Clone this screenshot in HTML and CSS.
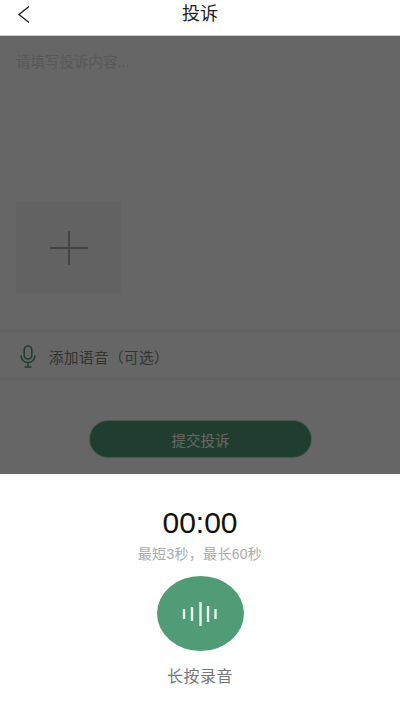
FILE: index.html
```html
<!DOCTYPE html>
<html lang="zh">
<head>
<meta charset="utf-8">
<title>投诉</title>
<link rel="stylesheet" href="styles.css">
</head>
<body>
<div class="page">
  <header class="nav">
    <svg class="back" width="16" height="20" viewBox="0 0 16 20"><path d="M13 1.5 L3 9.5 L13 17.5" fill="none" stroke="#222" stroke-width="1.4"/></svg>
    <h1 class="title">投诉</h1>
  </header>
  <main class="form">
    <p class="placeholder">请填写投诉内容...</p>
    <div class="add-box">
      <svg width="38" height="34" viewBox="0 0 38 34"><path d="M0 17H38M19 0V34" stroke="#a8a8a8" stroke-width="2"/></svg>
    </div>
    <div class="voice-row">
      <svg class="mic" width="16" height="23" viewBox="0 0 16 23"><rect x="4.2" y="1" width="7.6" height="13" rx="3.8" fill="none" stroke="#4e9d75" stroke-width="1.6"/><path d="M1 10.5C1.5 15 4 17.5 8 17.5S14.5 15 15 10.5M8 17.5V22M4.5 22H11.5" fill="none" stroke="#4e9d75" stroke-width="1.6"/></svg>
      <span class="voice-label">添加语音（可选）</span>
    </div>
    <button class="submit" type="button">提交投诉</button>
  </main>
  <section class="sheet">
    <div class="time">00:00</div>
    <div class="hint">最短3秒，最长60秒</div>
    <button class="record" type="button" aria-label="录音">
      <svg width="36" height="26" viewBox="0 0 36 26"><path d="M2 8V18M10 6V20M18.500 1V25M26 5V21M33.500 8V18" stroke="#eaf4ee" stroke-width="2.400" fill="none"/></svg>
    </button>
    <div class="record-label">长按录音</div>
  </section>
</div>
</body>
</html>
```
FILE: styles.css
```css
* { box-sizing: border-box; }
html, body { margin: 0; padding: 0; }
body {
  background: #fff;
  font-family: "Liberation Sans", "Noto Sans CJK SC", sans-serif;
}
.page {
  width: 400px;
  height: 715px;
  display: flex;
  flex-direction: column;
  overflow: hidden;
}
.nav {
  height: 36px;
  flex: none;
  padding-bottom: 7px;
  display: flex;
  align-items: center;
  justify-content: center;
  position: relative;
  background: #fff;
  border-bottom: 1px solid #ccc;
}
.back { position: absolute; left: 16px; top: 5px; }
.title {
  margin: 0;
  font-size: 18px;
  font-weight: 400;
  color: #222;
  line-height: 28px;
}
.form {
  position: relative;
  height: 438px;
  flex: none;
  background: #fff;
  display: flex;
  flex-direction: column;
}
.form::after {
  content: "";
  position: absolute;
  inset: 0;
  background: rgba(0, 0, 0, 0.6);
}
.placeholder {
  margin: 16px 0 0 16px;
  height: 20px;
  font-size: 14.500px;
  line-height: 20px;
  color: #dcdcdc;
}
.add-box {
  width: 105px;
  height: 91px;
  margin: 130px 0 0 16px;
  background: #f6f6f6;
  display: flex;
  align-items: center;
  justify-content: center;
}
.voice-row {
  height: 50px;
  margin-top: 37px;
  padding: 3px 0 0 20px;
  display: flex;
  align-items: center;
  gap: 13px;
  border-top: 2px solid #f8f8f8;
  border-bottom: 2px solid #f8f8f8;
}
.voice-label { font-size: 14.500px; letter-spacing: 0.500px; color: #808080; }
.submit {
  width: 221px;
  height: 36px;
  margin: 41px 0 0 90px;
  border: 0;
  border-radius: 18px;
  background: #4f9c76;
  box-shadow: 0 0 0 1px #c2dccf;
  color: #fff;
  font: inherit;
  font-size: 14.500px;
}
.sheet {
  flex: 1;
  background: #fff;
  display: flex;
  flex-direction: column;
  align-items: center;
}
.time {
  margin-top: 32px;
  font-size: 30px;
  line-height: 34px;
  color: #111;
}
.hint {
  margin-top: 4px;
  font-size: 14px;
  line-height: 20px;
  letter-spacing: 0.300px;
  color: #aaa;
}
.record {
  width: 87px;
  height: 75px;
  margin-top: 12px;
  padding: 0;
  border: 0;
  border-radius: 50%;
  background: #4f9c76;
  display: flex;
  align-items: center;
  justify-content: center;
}
.record-label {
  margin-top: 16px;
  font-size: 16px;
  line-height: 20px;
  letter-spacing: 0.500px;
  color: #777;
}
```
